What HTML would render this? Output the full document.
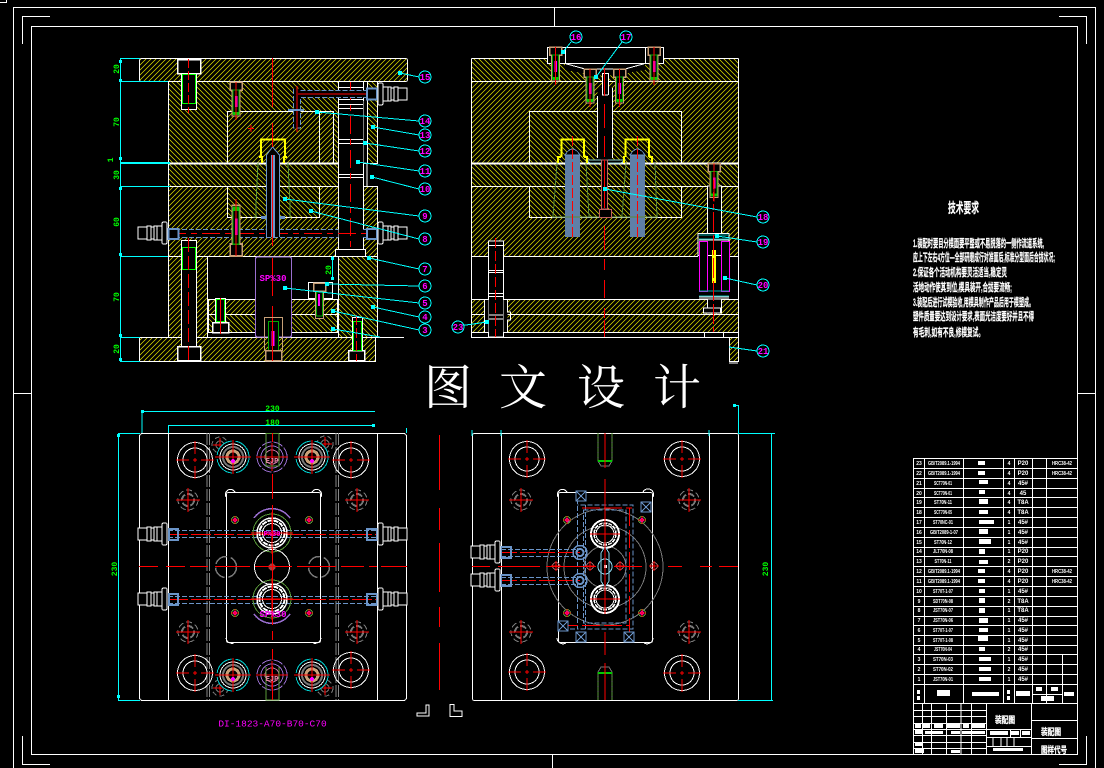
<!DOCTYPE html>
<html lang="zh">
<head>
<meta charset="utf-8">
<title>Mold Assembly Drawing</title>
<style>
html,body{margin:0;padding:0;background:#000;width:1104px;height:768px;overflow:hidden}
svg{display:block;position:absolute;left:0;top:0}
.l{fill:none;stroke:#fff;stroke-width:1}
.r{fill:none;stroke:#f00;stroke-width:1}
.rd{fill:none;stroke:#f00;stroke-width:1;stroke-dasharray:18 5 6 5}
.c{fill:none;stroke:#0ff;stroke-width:1}
.b{fill:none;stroke:#6a94c8;stroke-width:1;stroke-dasharray:5 2}
.dim{font:bold 8px "Liberation Mono",monospace;fill:#0f0;text-anchor:middle}
.lab{font:bold 9px "Liberation Mono",monospace;fill:#f0f;text-anchor:middle}
.t{font:bold 5px "Liberation Sans",sans-serif;fill:#fff;text-anchor:middle}
.req{font:bold 11px "Liberation Sans","Noto Sans CJK SC",sans-serif;fill:#fff;stroke:#fff;stroke-width:.2}
.wm{font:48px "Liberation Serif","Noto Serif CJK SC",serif;fill:#fff;text-anchor:middle}
</style>
</head>
<body>
<svg width="1104" height="768" viewBox="0 0 1104 768" xmlns="http://www.w3.org/2000/svg">
<defs>
<pattern id="h1" patternUnits="userSpaceOnUse" width="5" height="5"><rect width="5" height="5" fill="#000"/><path d="M-1 6L6 -1M-1 1L1 -1M4 6L6 4" stroke="#e8e800" stroke-width=".7" fill="none"/></pattern>
<pattern id="h2" patternUnits="userSpaceOnUse" width="5" height="5"><rect width="5" height="5" fill="#000"/><path d="M-1 -1L6 6M-1 4L1 6M4 -1L6 1" stroke="#e8e800" stroke-width=".7" fill="none"/></pattern>
<g id="nozzle"><rect x="0" y="-11" width="5" height="22" rx="1.5" fill="#000" stroke="#fff"/><rect x="5" y="-7" width="5" height="14" fill="#000" stroke="#fff"/><rect x="10" y="-7" width="3" height="14" fill="#000" stroke="#fff"/><rect x="13" y="-6" width="3" height="12" fill="#000" stroke="#fff"/><rect x="16" y="-7" width="4" height="14" fill="#000" stroke="#fff"/><rect x="20" y="-6" width="9" height="12" fill="#000" stroke="#fff"/></g>
<g id="bolt"><rect x="-6" y="0" width="12" height="8" fill="#000" stroke="#c8a078" stroke-width="1.5"/><rect x="-4" y="8" width="8" height="26" fill="#000" stroke="#c8a078"/><rect x="-3" y="8" width="6" height="24" fill="#000" stroke="#0a0"/><rect x="-1" y="14" width="2.5" height="11" fill="#f0f"/><rect x="-3" y="30" width="6" height="3" fill="#0c0"/><path d="M0 0V38" class="r"/></g>
<g id="big"><circle r="17.5" class="l"/><circle r="12" class="l"/><path d="M-19 0H-6M6 0H19M0 -19V-6M0 6V19M-2 0H2M0 -2V2" class="r"/></g>
<g id="sm"><circle r="10" fill="none" stroke="#777" stroke-dasharray="6 3"/><circle r="6" fill="none" stroke="#777" stroke-width="2" stroke-dasharray="7 2"/><path d="M-12 0H12M0 -12V12" class="r"/></g>
<g id="sm2"><circle r="8" fill="none" stroke="#777" stroke-dasharray="5 3"/><circle r="4" fill="none" stroke="#777"/><path d="M-7 0H7M0 -7V7" class="r"/></g>
<g id="cy"><circle r="16" fill="#000" stroke="#0cc" stroke-dasharray="22 4"/><circle r="13" fill="none" stroke="#fff"/><circle r="10" fill="none" stroke="#777" stroke-width="2"/><circle r="6" fill="none" stroke="#c8a078" stroke-width="3"/><path d="M-18 0H18M0 -17V17" class="r"/><circle cy="4" r="2" fill="#f0f"/></g>
<g id="pu"><circle r="15" fill="none" stroke="#9a6fd0" stroke-dasharray="10 2"/><circle r="11" fill="none" stroke="#9a6fd0"/><circle r="7" fill="none" stroke="#c06fa0"/><path d="M-16 0H16M0 -14V14" class="r"/></g>
<g id="pin"><circle r="3.5" fill="none" stroke="#5a9a3a"/><circle r="2" fill="#f0f"/><path d="M-4 0H4M0 -4V4" stroke="#f00" stroke-width=".6"/></g>
<g id="cav"><circle r="19" fill="none" stroke="#5a9a3a"/><circle r="15" fill="none" stroke="#fff" stroke-width="1.5"/><circle r="12.5" fill="none" stroke="#fff" stroke-width="2" stroke-dasharray="5 1"/><circle r="9.5" fill="none" stroke="#fff"/><path d="M-21 0H21M0 -21V21" class="r"/></g>
<g id="cav2"><circle r="14" fill="none" stroke="#fff" stroke-width="2"/><circle r="11" fill="none" stroke="#fff" stroke-width="1.5" stroke-dasharray="4 1"/><circle r="9" fill="none" stroke="#fff"/><path d="M-15 0H15M0 -15V15" class="r"/></g>
<g id="cr"><circle r="3.5" fill="none" stroke="#a06060"/><path d="M-5 0H5M0 -5V5" class="r"/></g>
<g id="sq"><rect x="-5" y="-5" width="10" height="10" fill="#000" stroke="#6a94c8"/><path d="M-5 -5L5 5M5 -5L-5 5" stroke="#6a94c8"/></g>
</defs>

<g shape-rendering="crispEdges">
<!-- sheet frame -->
<path class="l" d="M0 2.5H6.5V0M13.5 768V7.5H1095.5V768M22.5 44V16.5H50M1059 16.5H1086.5V44M22.5 736V764.5H50M1059 764.5H1086.5V736M31.5 26.5H1077.5V754.5H31.5ZM554.5 7.5V26M13.5 393.5H31M1078 393.5H1095M552.5 755V768"/>

<!-- LEFT SECTION VIEW -->
<g stroke="#fff">
<rect x="139.5" y="58.5" width="268" height="23" rx="2" fill="url(#h1)"/>
<rect x="168.5" y="81.5" width="209" height="82" fill="url(#h2)"/>
<rect x="227.5" y="111.5" width="92" height="52" fill="url(#h1)"/>
<rect x="319.5" y="111.5" width="14" height="52" fill="url(#h1)"/>
<rect x="168.5" y="163.5" width="170" height="23" fill="url(#h2)"/>
<rect x="168.5" y="186.5" width="209" height="70" fill="url(#h1)"/>
<rect x="227.5" y="186.5" width="92" height="31" fill="url(#h2)"/>
<rect x="168.5" y="256.5" width="39" height="81" fill="url(#h1)"/>
<rect x="338.5" y="256.5" width="39" height="81" fill="url(#h2)"/>
<rect x="208.5" y="299.5" width="129" height="15" fill="url(#h1)"/>
<rect x="208.5" y="314.5" width="129" height="18" fill="url(#h2)"/>
<rect x="139.5" y="337.5" width="236" height="24" fill="url(#h1)"/>
</g>
<path class="l" d="M375 337.5H404"/>
<path d="M168 163.5H338" stroke="#fff" stroke-width="2"/>
<rect x="338.5" y="81.5" width="25" height="175" fill="#000" stroke="#fff"/>
<rect x="363.5" y="81.5" width="4" height="20" fill="#000" stroke="#fff"/>
<rect x="363.5" y="101" width="4" height="62" fill="#000"/>
<path class="l" d="M367.5 101V163M338 87.5H363M338 99.5H363M338 104.5H363M338 108.5H363M338 139.5H363M338 143.5H363M338 174.5H363M338 177.5H363M363.5 163V186M367 163.5V186"/>
<rect x="335.5" y="249.5" width="30" height="7" fill="#000" stroke="#fff"/>
<path class="rd" d="M350.5 82V250"/>
<rect x="293.5" y="88.5" width="7" height="40" fill="#000"/>
<rect x="293.5" y="90.5" width="74" height="7" fill="#000"/>
<path class="b" d="M293.5 89V128H300.5V97.5H367M300.5 90.5H367"/>
<path class="r" d="M297 86V132M298 94H378"/>
<rect x="288" y="109" width="16" height="2" fill="#6a94c8"/>
<rect x="367" y="88.5" width="10" height="11" fill="#000" stroke="#6a94c8" stroke-width="2"/>
<rect x="168.5" y="229.5" width="170" height="8" fill="#000"/>
<rect x="363" y="229.5" width="14" height="8" fill="#000"/>
<path class="b" d="M168 229.5H266M279 229.5H338M168 237.5H338M363 229.5H377M363 237.5H377"/>
<path class="rd" d="M168 233.5H377"/>
<rect x="168.5" y="229" width="10" height="10" fill="#000" stroke="#6a94c8" stroke-width="2"/>
<rect x="367" y="229" width="10" height="10" fill="#000" stroke="#6a94c8" stroke-width="2"/>
<path d="M266.5 237V155L272.5 147L279.5 155V237Z" fill="#000"/>
<path d="M266.5 237V155L272.5 147L279.5 155V237" fill="none" stroke="#6a94c8"/>
<rect x="271" y="155" width="4" height="82" fill="#6a94c8"/>
<path d="M261 156V139.5H285V156" fill="none" stroke="#ff0" stroke-width="2"/>
<path d="M259 157H262V163M287 157H284V163" fill="none" stroke="#ff0" stroke-width="2"/>
<path d="M258 163L256 205V217H253.5M288 163L290 205V217H291.5" fill="none" stroke="#5a9a3a"/>
<path d="M261 217.5H266M279 217.5H285" stroke="#6a94c8" stroke-width="3"/>
<path class="r" d="M272.5 58V107M272.5 123V147M272.5 155V246M272.5 262V282M272.5 306V318"/>
<rect x="177.5" y="59.5" width="23" height="14" fill="#000" stroke="#fff" stroke-width="1.5"/>
<rect x="181.5" y="73.5" width="15" height="36" fill="#000" stroke="#fff"/>
<rect x="182.5" y="74.5" width="13" height="29" fill="#000" stroke="#0f0"/>
<path class="r" d="M188.5 59V113" stroke-dasharray="9 3"/>
<rect x="181.5" y="240.5" width="15" height="8" fill="#000" stroke="#fff"/>
<rect x="181.5" y="248.5" width="15" height="99" fill="#000" stroke="#fff"/>
<rect x="182.5" y="247.5" width="13" height="22" fill="#000" stroke="#0f0"/>
<rect x="177.5" y="346.5" width="23" height="14" fill="#000" stroke="#fff" stroke-width="1.5"/>
<path class="r" d="M188.5 238V361" stroke-dasharray="14 4"/>
<use href="#bolt" x="236" y="82"/>
<use href="#bolt" transform="translate(236 256) scale(1 -1.5)"/>
<rect x="212.5" y="322.5" width="16" height="10" fill="#000" stroke="#fff" stroke-width="1.5"/>
<rect x="215.5" y="298.5" width="10" height="24" fill="#000" stroke="#fff"/>
<rect x="216.5" y="299.5" width="8" height="22" fill="#000" stroke="#0f0"/>
<path class="r" d="M220.5 298V334"/>
<rect x="255.5" y="257" width="36" height="80" rx="2" fill="#000" stroke="#9a6fd0" stroke-width="1.3"/>
<path class="r" d="M272.5 258V296M272.5 306V318"/>
<rect x="268.5" y="321.5" width="10" height="29" fill="#000" stroke="#0a0"/>
<rect x="264.5" y="317.5" width="18" height="33" fill="none" stroke="#c8a078"/>
<rect x="271.5" y="331" width="3" height="15" fill="#f0f"/>
<rect x="265.5" y="350.5" width="16" height="10" fill="#000" stroke="#c8a078" stroke-width="1.5"/>
<path class="r" d="M272.5 318V361"/>
<rect x="308.5" y="282.5" width="24" height="16" fill="#000" stroke="#fff"/>
<rect x="313.5" y="283" width="12" height="8" fill="#000" stroke="#c8a078" stroke-width="1.5"/>
<rect x="315.5" y="291.5" width="8" height="27" fill="#000" stroke="#c8a078"/>
<rect x="316.5" y="292" width="6" height="24" fill="#000" stroke="#0a0"/>
<rect x="318" y="294" width="2" height="12" fill="#f0f"/>
<rect x="348.5" y="350.5" width="16" height="10" fill="#000" stroke="#fff" stroke-width="1.5"/>
<rect x="352.5" y="317.5" width="10" height="33" fill="#000" stroke="#fff"/>
<rect x="353.5" y="321.5" width="8" height="29" fill="#000" stroke="#0f0"/>
<path class="r" d="M356.5 315V361" stroke-dasharray="10 3"/>
<path d="M248 128.5H254M251 125V132" class="r"/>
<use href="#nozzle" x="378" y="94"/>
<use href="#nozzle" x="378" y="233"/>
<use href="#nozzle" transform="translate(167 233) scale(-1 1)"/>

<path class="c" d="M120.5 58V361M120 58.5H140M120 81.5H168M120 186.5H170M120 256.5H168M120 337.5H140M120 361.5H140M332.5 256V279"/>
<path d="M120 163H170" stroke="#0ff" stroke-width="2"/>
<g fill="#0ff"><rect x="119" y="60" width="3" height="3"/><rect x="119" y="79" width="3" height="3"/><rect x="119" y="157" width="3" height="3"/><rect x="119" y="187" width="3" height="3"/><rect x="119" y="253" width="3" height="3"/><rect x="119" y="334" width="3" height="3"/><rect x="119" y="358" width="3" height="3"/><rect x="331" y="257" width="3" height="3"/><rect x="331" y="277" width="3" height="3"/></g>

<!-- RIGHT SECTION VIEW -->
<g stroke="#fff">
<rect x="471.5" y="58.5" width="267" height="23" rx="1" fill="url(#h2)"/>
<rect x="471.5" y="81.5" width="267" height="82" fill="url(#h1)"/>
<rect x="529.5" y="111.5" width="152" height="52" fill="url(#h2)"/>
<rect x="471.5" y="163.5" width="267" height="23" fill="url(#h2)"/>
<rect x="471.5" y="186.5" width="267" height="70" fill="url(#h1)"/>
<rect x="529.5" y="186.5" width="152" height="31" fill="url(#h2)"/>
<rect x="471.5" y="256.5" width="267" height="43" fill="#000"/>
<rect x="471.5" y="299.5" width="267" height="15" fill="url(#h1)"/>
<rect x="471.5" y="314.5" width="267" height="18" fill="url(#h1)"/>
<rect x="471.5" y="332.5" width="267" height="5" fill="#000"/>
<rect x="729.5" y="337.5" width="9" height="24" fill="url(#h1)"/>
</g>
<path d="M471 163.5H738" stroke="#fff" stroke-width="2"/>
<path d="M565 63H645V70L628 73 L605 76 L582 73 L565 70Z" fill="#000"/>
<rect x="547.5" y="47.5" width="116" height="16" fill="#000" stroke="#fff"/>
<path class="l" d="M565.5 47.5V63M645.5 47.5V63M565 63.5L585 69H625L645 63.5"/>
<use href="#bolt" x="555.5" y="47"/>
<use href="#bolt" x="654" y="47"/>
<use href="#bolt" x="590" y="69"/>
<use href="#bolt" x="619.5" y="69"/>
<rect x="602" y="73" width="6" height="86" fill="#000"/>
<rect x="597.5" y="88" width="15" height="72" fill="#000"/>
<path class="l" d="M602.5 73V95M608.5 73V95M597.5 96V158M612.5 88V158M602 95H608"/>
<path class="l" d="M602 73.5H608M590 163H620"/>
<path d="M604.5 68V96M604.5 104V128M604.5 136V157" class="r"/>
<path d="M590 163L586 160H625L621 163Z" fill="#000" stroke="#8cc"/>
<path d="M561.5 157V139.5H584V157M625.5 157V139.5H649V157" fill="none" stroke="#ff0" stroke-width="2"/>
<path d="M558 163V157H561M587 163V157H584M624 163V157H625M652 163V157H649" fill="none" stroke="#ff0" stroke-width="2"/>
<rect x="565" y="155" width="15" height="82" fill="#5f7fa8"/>
<rect x="630" y="155" width="15" height="82" fill="#5f7fa8"/>
<path d="M565 155 Q572.5 143 580 155ZM630 155 Q637.5 143 645 155Z" fill="#000" stroke="#6a94c8"/>
<path d="M557 163L553 217M586 163L589 217M626 163L622 217M655 163L657 217M552 217H658" fill="none" stroke="#5a8a3a"/>
<path d="M572.5 136V237M637.5 136V237" stroke="#f00" stroke-dasharray="10 3"/>
<rect x="601.5" y="160" width="6" height="49" fill="#000" stroke="#c06060"/>
<rect x="599.5" y="209.5" width="12" height="8" fill="#000" stroke="#c06060"/>
<path class="r" d="M604.5 160V208M604.5 226V250M604.5 259V270M604.5 280V298M604.5 308V318M604.5 320V337"/>
<rect x="488.5" y="241" width="15" height="96" fill="#000" stroke="#fff"/>
<path class="l" d="M488 245.5H503M488 270.5H503M488 272.5H503M488 293.5H503M488 296.5H503M488 315H503M488 319H503"/>
<path d="M495.5 238V337" stroke="#f00" stroke-dasharray="10 3"/>
<rect x="484.5" y="300" width="4" height="32" fill="#000"/>
<rect x="503.5" y="300" width="4" height="32" fill="#000"/>
<path class="l" d="M484.5 300V332M507.5 300V312H510.5V320H507.5V332"/>
<rect x="707.5" y="186" width="14" height="127" fill="#000" stroke="#fff"/>
<use href="#bolt" x="714" y="163.5"/>
<rect x="703.5" y="308" width="17" height="5" fill="#000" stroke="#fff"/>
<rect x="698" y="233.5" width="31" height="22" fill="#000" stroke="#fff"/>
<rect x="698" y="256" width="31" height="43" fill="#000"/>
<rect x="699.5" y="241.5" width="8" height="50" fill="#000" stroke="#f0f"/>
<rect x="721.5" y="241.5" width="8" height="50" fill="#000" stroke="#f0f"/>
<path class="l" d="M699 240H729M699 299H729M699 297H729"/>
<path d="M699 235H729M699 239H729M699 291H729M699 296H729" stroke="#0aa"/>
<rect x="712" y="250" width="4" height="33" fill="#ff0"/>
<path class="r" d="M713.5 180V210" stroke-dasharray="9 3"/>
<path d="M713.5 212V334" stroke="#f00" stroke-dasharray="20 3"/>
<rect x="704.5" y="332.5" width="19" height="5" fill="#000" stroke="#fff"/>
<path class="l" d="M729 363H738"/>

<!-- labels -->
<g class="c">
<path d="M400 73L419 77M317 112L419 121M373 127L419 135M365 143L419 151M358 162L419 171M372 177L419 189M285 199L419 216M311 211L419 239M369 258L419 269M327 284L419 286M285 288L419 303M373 307L419 317M333 311L419 330M333 329L380 337M563 52L571 42M596 77L622 42M605 189L757 217M717 236L757 242M725 278L757 285M729 347L757 351M487 322L452 327"/>
</g>
<g fill="#0ff"><rect x="398" y="71" width="4" height="4"/><rect x="315" y="110" width="4" height="4"/><rect x="371" y="125" width="4" height="4"/><rect x="363" y="141" width="4" height="4"/><rect x="356" y="160" width="4" height="4"/><rect x="370" y="175" width="4" height="4"/><rect x="283" y="197" width="4" height="4"/><rect x="309" y="209" width="4" height="4"/><rect x="367" y="256" width="4" height="4"/><rect x="325" y="282" width="4" height="4"/><rect x="283" y="286" width="4" height="4"/><rect x="371" y="305" width="4" height="4"/><rect x="331" y="309" width="4" height="4"/><rect x="331" y="327" width="4" height="4"/><rect x="561" y="50" width="4" height="4"/><rect x="594" y="75" width="4" height="4"/><rect x="603" y="187" width="4" height="4"/><rect x="715" y="234" width="4" height="4"/><rect x="723" y="276" width="4" height="4"/><rect x="485" y="320" width="4" height="4"/></g>
<g fill="#000" stroke="#0ff">
<circle cx="425" cy="77" r="6"/><circle cx="425" cy="121" r="6"/><circle cx="425" cy="135" r="6"/><circle cx="425" cy="151" r="6"/><circle cx="425" cy="171" r="6"/><circle cx="425" cy="189" r="6"/><circle cx="425" cy="216" r="6"/><circle cx="425" cy="239" r="6"/><circle cx="425" cy="269" r="6"/><circle cx="425" cy="286" r="6"/><circle cx="425" cy="303" r="6"/><circle cx="425" cy="317" r="6"/><circle cx="425" cy="330" r="6"/>
<circle cx="576" cy="37" r="6"/><circle cx="626" cy="37" r="6"/><circle cx="763" cy="217" r="6"/><circle cx="763" cy="242" r="6"/><circle cx="763" cy="285" r="6"/><circle cx="763" cy="351" r="6"/><circle cx="458" cy="327" r="6"/>
</g>
</g>

<g>
<text class="lab" x="273" y="281">SP%30</text>
<text class="lab" x="425" y="80">15</text><text class="lab" x="425" y="124">14</text><text class="lab" x="425" y="138">13</text><text class="lab" x="425" y="154">12</text><text class="lab" x="425" y="174">11</text><text class="lab" x="425" y="192">10</text><text class="lab" x="425" y="219">9</text><text class="lab" x="425" y="242">8</text><text class="lab" x="425" y="272">7</text><text class="lab" x="425" y="289">6</text><text class="lab" x="425" y="306">5</text><text class="lab" x="425" y="320">4</text><text class="lab" x="425" y="333">3</text>
<text class="lab" x="576" y="40">16</text><text class="lab" x="626" y="40">17</text><text class="lab" x="763" y="220">18</text><text class="lab" x="763" y="245">19</text><text class="lab" x="763" y="288">20</text><text class="lab" x="763" y="354">21</text><text class="lab" x="458" y="330">23</text>
<text class="dim" transform="translate(119 69) rotate(-90)">20</text>
<text class="dim" transform="translate(119 122) rotate(-90)">70</text>
<text class="dim" transform="translate(113 160) rotate(-90)">1</text>
<text class="dim" transform="translate(119 175) rotate(-90)">30</text>
<text class="dim" transform="translate(119 222) rotate(-90)">60</text>
<text class="dim" transform="translate(119 297) rotate(-90)">70</text>
<text class="dim" transform="translate(119 349) rotate(-90)">20</text>
<text class="dim" transform="translate(331 270) rotate(-90)">20</text>
</g>

<!-- BOTTOM LEFT PLAN VIEW -->
<g shape-rendering="crispEdges">
<rect x="139.5" y="433.5" width="267" height="267" rx="3" class="l"/>
<path class="l" d="M168.5 433V700M377.5 433V700"/>
<path d="M207 433V700M209.5 433V700M336 433V700M338.5 433V700" stroke="#888" stroke-dasharray="12 2" fill="none"/>
<rect x="226.5" y="492.5" width="94" height="150" rx="2" class="l"/>
<path class="l" d="M226 497A5 5 0 0 1 235 492M312 492A5 5 0 0 1 321 497M226 638A6 6 0 0 0 234 643M313 643A6 6 0 0 0 321 638"/>
<use href="#big" x="195" y="460"/><use href="#big" x="351" y="460"/><use href="#big" x="195" y="673"/><use href="#big" x="351" y="670"/>
<use href="#sm2" x="220" y="445"/><use href="#sm2" x="325" y="444"/><use href="#sm2" x="220" y="688"/><use href="#sm2" x="325" y="688"/>
<use href="#cy" x="233" y="457"/><use href="#cy" x="312" y="457"/><use href="#cy" x="233" y="675"/><use href="#cy" x="312" y="675"/>
<use href="#pu" x="272" y="457"/><use href="#pu" x="272" y="675"/>
<path d="M266 433.5H279M266 433V466H279V433M266 667V700H279V667" fill="none" stroke="#5a9a3a"/>
<use href="#sm" x="188" y="500"/><use href="#sm" x="357" y="500"/><use href="#sm" x="188" y="632"/><use href="#sm" x="357" y="632"/>
<use href="#pin" x="235" y="520"/><use href="#pin" x="309" y="520"/><use href="#pin" x="235" y="613"/><use href="#pin" x="309" y="613"/>
<path class="b" d="M168 530.5H378M168 537.5H378M168 596.5H378M168 603.5H378"/>
<path d="M168 534.5H378M168 599.5H378" stroke="#f00" stroke-dasharray="20 3"/>
<g fill="none" stroke="#6a94c8" stroke-width="2"><rect x="169" y="529" width="9" height="11"/><rect x="367" y="529" width="10" height="11"/><rect x="169" y="594" width="9" height="11"/><rect x="367" y="594" width="10" height="11"/></g>
<use href="#nozzle" x="378" y="534"/><use href="#nozzle" x="378" y="599"/>
<use href="#nozzle" transform="translate(167 534) scale(-1 1)"/><use href="#nozzle" transform="translate(167 599) scale(-1 1)"/>
<path d="M254 518A22 22 0 0 1 290 518" fill="none" stroke="#9a6fd0" stroke-width="1.5"/>
<path d="M254 614A22 22 0 0 0 290 614" fill="none" stroke="#9a6fd0" stroke-width="1.5"/>
<use href="#cav" x="272" y="533"/><use href="#cav" x="272" y="599"/>
<circle cx="272" cy="567" r="17.5" class="l"/>
<circle cx="272" cy="567" r="3.5" fill="#a04040"/>
<circle cx="226" cy="567" r="10.5" fill="none" stroke="#777" stroke-width="1.5" stroke-dasharray="14 4"/>
<circle cx="319" cy="567" r="10.5" fill="none" stroke="#777" stroke-width="1.5" stroke-dasharray="14 4"/>
<path d="M139 566.5H158M166 566.5H185M190 566.5H208M215 566.5H250M255 566.5H292M297 566.5H336M341 566.5H364M369 566.5H377M381 566.5H407" class="r"/>
<path d="M272.5 433V442M272.5 474V499M272.5 505V540M272.5 548V625M272.5 631V640M272.5 649V660M272.5 666V700" class="r"/>
<path class="c" d="M142 411.5H375M142 411V433M168.5 425V433M168 425.5H373M118.5 433V700M118 433.5H140M118 700.5H140M406.5 428V433"/>
<g fill="#0ff"><rect x="141" y="410" width="3" height="3"/><rect x="372" y="424" width="3" height="3"/><rect x="117" y="434" width="3" height="3"/><rect x="117" y="695" width="3" height="3"/></g>
<path class="r" d="M439.5 435V490M439.5 508V530M439.5 543V592M439.5 607V627M439.5 643V690"/>
<path d="M417 716H429V705H426V713H417Z" fill="#000" stroke="#fff"/>
<path d="M450 704.5H454V711H462V716.5H450Z" fill="#000" stroke="#fff"/>
</g>
<text class="dim" x="272.500" y="411">230</text>
<text class="dim" x="272.500" y="425">180</text>
<text class="dim" transform="translate(117 569) rotate(-90)">230</text>
<text x="272.500" y="726.500" style="font:9.500px 'Liberation Mono',monospace;fill:#f0f;text-anchor:middle">DI-1823-A70-B70-C70</text>
<text class="lab" x="272" y="536" style="font-size:7px">P%30</text>
<text class="lab" x="273" y="617">SP%30</text>
<text class="lab" x="272" y="463" style="font-size:7px;fill:#e8a">EJP</text>
<text class="lab" x="272" y="681" style="font-size:7px;fill:#e8a">EJP</text>

<!-- BOTTOM RIGHT PLAN VIEW -->
<g shape-rendering="crispEdges">
<rect x="472.500" y="433.500" width="266" height="267" rx="2" class="l"/>
<path class="l" d="M501.500 433V700M709.500 433V700"/>
<path class="c" d="M472 430V436M501 430V436M709 430V436M738.500 405V433M733 405.500H738M738 433.500H775M738 700.500H773M771.500 434V700"/>
<rect x="733" y="404" width="3" height="3" fill="#0ff"/>
<use href="#big" x="527" y="459"/><use href="#big" x="682" y="459"/><use href="#big" x="527" y="672"/><use href="#big" x="682" y="673"/>
<use href="#sm" x="521" y="500"/><use href="#sm" x="689" y="500"/><use href="#sm" x="521" y="632"/><use href="#sm" x="689" y="632"/>
<rect x="558.500" y="492.500" width="94" height="150" rx="2" class="l"/>
<path class="l" d="M558 497A5 5 0 0 1 567 492M643 492A5 5 0 0 1 653 497M557 638A6 6 0 0 0 566 643M644 643A6 6 0 0 0 653 638"/>
<g fill="none" stroke="#777">
<circle cx="605" cy="567" r="58"/><circle cx="605" cy="567" r="41"/><circle cx="605" cy="567" r="21"/>
<path d="M598 433V461L601 466H609L612 461V433M598 700V672L601 667H609L612 672V700"/>
</g>
<path d="M598 433V461M612 433V461M598 672V700M612 672V700" stroke="#5a9a3a" stroke-dasharray="4 1"/>
<path d="M598 461H612M598 673H612" stroke="#0c0" stroke-width="2"/>
<path class="b" d="M577.500 492V629H633V505H577.500M585.500 629V505M583.500 510H626V623H583.500ZM563 629H577"/>
<path class="r" d="M582 508H632M629.500 508V642M560 625.500H630" stroke-dasharray="18 4"/>
<path class="b" d="M501 549.500H578M501 556.500H578M501 577.500H578M501 584.500H578"/>
<path d="M501 552.500H580M501 580.500H580" stroke="#f00" stroke-dasharray="16 3"/>
<g fill="none" stroke="#6a94c8" stroke-width="2"><rect x="501" y="547" width="10" height="11"/><rect x="501" y="575" width="10" height="11"/></g>
<circle cx="580" cy="552.500" r="7" fill="none" stroke="#6a94c8" stroke-width="1.500"/><circle cx="580" cy="552.500" r="3.500" fill="none" stroke="#6a94c8" stroke-width="2"/>
<circle cx="580" cy="580.500" r="7" fill="none" stroke="#6a94c8" stroke-width="1.500"/><circle cx="580" cy="580.500" r="3.500" fill="none" stroke="#6a94c8" stroke-width="2"/>
<use href="#nozzle" transform="translate(500 552) scale(-1 1)"/><use href="#nozzle" transform="translate(500 580) scale(-1 1)"/>
<use href="#sq" x="581" y="496"/><use href="#sq" x="646" y="507"/><use href="#sq" x="563" y="626"/><use href="#sq" x="581" y="637"/><use href="#sq" x="629" y="637"/>
<use href="#cav2" x="605" y="534"/><use href="#cav2" x="605" y="599"/>
<use href="#pin" x="567" y="520"/><use href="#pin" x="642" y="520"/><use href="#pin" x="567" y="613"/><use href="#pin" x="642" y="613"/>
<path d="M601 553L604 548H606L609 553V581L606 586H604L601 581Z" fill="#000" stroke="#8cd8f0"/>
<ellipse cx="605" cy="566.500" rx="7" ry="7.500" fill="none" stroke="#8cd8f0"/>
<use href="#cr" x="556" y="566"/><use href="#cr" x="590" y="566"/><use href="#cr" x="620" y="566"/><use href="#cr" x="654" y="566"/>
<rect x="604" y="565" width="3" height="3" fill="#fff"/>
<path d="M472 566.500H490M498 566.500H540M546 566.500H596M614 566.500H642M668 566.500H682M700 566.500H712M719 566.500H738" class="r"/>
<path d="M605 433V468M605 479V519M605 525V612M605 632V655M605 663V700" class="r"/>
</g>
<text class="dim" transform="translate(768 569) rotate(-90)">230</text>

<!-- TECH REQUIREMENTS -->
<text class="req" x="948" y="213" textLength="31" lengthAdjust="spacingAndGlyphs" style="font-size:14px">技术要求</text>
<text class="req" x="913" y="247" textLength="131" lengthAdjust="spacingAndGlyphs">1.装配时要目分模面要平整或不易脱落的一侧作流道系统,</text>
<text class="req" x="913" y="261" textLength="142" lengthAdjust="spacingAndGlyphs">应上下左右4方位—全部研磨成行对准面后,标准分型面后合拢状况;</text>
<text class="req" x="913" y="276" textLength="94" lengthAdjust="spacingAndGlyphs">2.保证各个活动机构要灵活适当,稳定灵</text>
<text class="req" x="913" y="291" textLength="99" lengthAdjust="spacingAndGlyphs">活地动作使其到位,模具装开,合拢要流畅;</text>
<text class="req" x="913" y="306" textLength="121" lengthAdjust="spacingAndGlyphs">3.装配后进行试模验收,用模具制作产品后用于模塑成。</text>
<text class="req" x="913" y="320" textLength="121" lengthAdjust="spacingAndGlyphs">塑件质量要达到设计要求,表面光洁度要好并且不得</text>
<text class="req" x="913" y="336" textLength="71" lengthAdjust="spacingAndGlyphs">有毛刺,如有不良,修模复试。</text>

<!-- TITLE TABLE -->
<g shape-rendering="crispEdges">
<path class="l" d="M913.500 458.500H1077.500M913.500 468.500H1077.500M913.500 478.500H1077.500M913.500 488.500H1077.500M913.500 497.500H1077.500M913.500 507.500H1077.500M913.500 517.500H1077.500M913.500 527.500H1077.500M913.500 537.500H1077.500M913.500 547.500H1077.500M913.500 556.500H1077.500M913.500 566.500H1077.500M913.500 576.500H1077.500M913.500 586.500H1077.500M913.500 596.500H1077.500M913.500 606.500H1077.500M913.500 616.500H1077.500M913.500 625.500H1077.500M913.500 635.500H1077.500M913.500 645.500H1077.500M913.500 654.500H1077.500M913.500 664.500H1077.500M913.500 674.500H1077.500M913.500 684.500H1077.500M913.500 703.500H1077.500"/>
<path class="l" d="M913.500 458V754M924.500 458V703M963.500 458V703M1003.500 458V703M1014.500 458V703M1032.500 458V703M1046.500 458V703M1062.500 654V703M1032.500 694.500H1062.500"/>
<g fill="#fff">
<rect x="978" y="461" width="7" height="4"/><rect x="978" y="471" width="7" height="4"/><rect x="979" y="480" width="9" height="4"/><rect x="979" y="490" width="6" height="4"/><rect x="979" y="499" width="9" height="5"/><rect x="979" y="510" width="9" height="4"/><rect x="979" y="520" width="15" height="4"/><rect x="979" y="529" width="9" height="5"/><rect x="979" y="539" width="12" height="5"/><rect x="979" y="549" width="6" height="5"/><rect x="979" y="560" width="9" height="4"/><rect x="978" y="569" width="7" height="4"/><rect x="978" y="579" width="7" height="4"/><rect x="979" y="589" width="6" height="4"/><rect x="979" y="598" width="6" height="5"/><rect x="979" y="608" width="6" height="5"/><rect x="979" y="618" width="9" height="5"/><rect x="979" y="628" width="9" height="4"/><rect x="978" y="636" width="10" height="5"/><rect x="979" y="647" width="6" height="4"/><rect x="979" y="657" width="12" height="4"/><rect x="979" y="667" width="12" height="4"/><rect x="979" y="677" width="12" height="4"/>
<rect x="917" y="690" width="3" height="4"/><rect x="917" y="696" width="3" height="4"/><rect x="937" y="690" width="13" height="6"/><rect x="972" y="692" width="27" height="4"/><rect x="1007" y="690" width="3" height="4"/><rect x="1007" y="696" width="3" height="4"/><rect x="1016" y="691" width="14" height="5"/><rect x="1036" y="687" width="6" height="4"/><rect x="1051" y="687" width="7" height="4"/><rect x="1041" y="696" width="13" height="5"/><rect x="1064" y="692" width="10" height="4"/>
</g>
<path class="l" d="M913.500 703.500V754M913.500 710.500H986.500M913.500 716.500H986.500M913.500 723.500H986.500M913.500 729.500H986.500M913.500 735.500H986.500M913.500 742.500H986.500M913.500 748.500H986.500M922.500 703V754M931.500 703V754M946.500 703V754M961 703V754M971.500 703V754M986.500 703V754M1031.500 703V754M986.500 729.500H1031.500M986.500 737.500H1031.500M986.500 746.500H1031.500M1031.500 720.500H1077.500M1031.500 738.500H1077.500M1010.500 729V737M1020.500 729V737M993 738V746M1001 738V746M1007 738V746M1014 738V746"/>
<g fill="#fff"><rect x="915" y="724" width="6" height="4"/><rect x="923" y="724" width="7" height="4"/><rect x="934" y="724" width="9" height="4"/><rect x="947" y="724" width="13" height="4"/><rect x="963" y="724" width="6" height="4"/><rect x="972" y="724" width="13" height="4"/>
<rect x="915" y="730" width="7" height="4"/><rect x="925" y="731" width="18" height="3"/><rect x="951" y="731" width="9" height="3"/><rect x="962" y="731" width="23" height="3"/>
<rect x="915" y="743" width="8" height="3"/><rect x="915" y="749" width="9" height="4"/><rect x="951" y="750" width="9" height="3"/>
<rect x="990" y="731" width="18" height="4"/><rect x="1011" y="731" width="8" height="4"/><rect x="1022" y="731" width="8" height="4"/><rect x="993" y="748" width="30" height="3"/></g>
</g>
<g>
<text class="t" x="944" y="465" textLength="32" lengthAdjust="spacingAndGlyphs">GB/T2089.1-1994</text><text class="t" x="944" y="475" textLength="32" lengthAdjust="spacingAndGlyphs">GB/T2089.1-1994</text>
<text class="t" x="943" y="485" textLength="18" lengthAdjust="spacingAndGlyphs">SCT70N-01</text><text class="t" x="943" y="495" textLength="18" lengthAdjust="spacingAndGlyphs">SCT70N-01</text>
<text class="t" x="943" y="504" textLength="18" lengthAdjust="spacingAndGlyphs">ST70N-11</text><text class="t" x="943" y="514" textLength="18" lengthAdjust="spacingAndGlyphs">SCT70N-05</text>
<text class="t" x="943" y="524" textLength="20" lengthAdjust="spacingAndGlyphs">ST70NC-01</text><text class="t" x="944" y="534" textLength="28" lengthAdjust="spacingAndGlyphs">GB/T2089-1-07</text>
<text class="t" x="943" y="544" textLength="18" lengthAdjust="spacingAndGlyphs">ST70N-12</text><text class="t" x="943" y="553" textLength="20" lengthAdjust="spacingAndGlyphs">JLT70N-08</text>
<text class="t" x="943" y="563" textLength="17" lengthAdjust="spacingAndGlyphs">ST70N-11</text><text class="t" x="944" y="573" textLength="32" lengthAdjust="spacingAndGlyphs">GB/T2089.1-1994</text>
<text class="t" x="944" y="583" textLength="32" lengthAdjust="spacingAndGlyphs">GB/T2089.1-1994</text><text class="t" x="943" y="593" textLength="20" lengthAdjust="spacingAndGlyphs">ST70T-1-07</text>
<text class="t" x="943" y="603" textLength="20" lengthAdjust="spacingAndGlyphs">SDT70N-08</text><text class="t" x="943" y="612" textLength="20" lengthAdjust="spacingAndGlyphs">JST70N-07</text>
<text class="t" x="943" y="622" textLength="20" lengthAdjust="spacingAndGlyphs">JST70N-06</text><text class="t" x="943" y="632" textLength="20" lengthAdjust="spacingAndGlyphs">ST70T-1-07</text>
<text class="t" x="943" y="642" textLength="20" lengthAdjust="spacingAndGlyphs">ST70T-1-08</text><text class="t" x="943" y="651" textLength="18" lengthAdjust="spacingAndGlyphs">JST70N-04</text>
<text class="t" x="943" y="661" textLength="20" lengthAdjust="spacingAndGlyphs">ST70N-03</text><text class="t" x="943" y="671" textLength="20" lengthAdjust="spacingAndGlyphs">ST70N-02</text>
<text class="t" x="943" y="681" textLength="20" lengthAdjust="spacingAndGlyphs">JST70N-01</text>
<text class="t" x="919" y="465">23</text><text class="t" x="919" y="475">22</text><text class="t" x="919" y="485">21</text><text class="t" x="919" y="495">20</text><text class="t" x="919" y="504">19</text><text class="t" x="919" y="514">18</text><text class="t" x="919" y="524">17</text><text class="t" x="919" y="534">16</text><text class="t" x="919" y="544">15</text><text class="t" x="919" y="553">14</text><text class="t" x="919" y="563">13</text><text class="t" x="919" y="573">12</text><text class="t" x="919" y="583">11</text><text class="t" x="919" y="593">10</text><text class="t" x="919" y="603">9</text><text class="t" x="919" y="612">8</text><text class="t" x="919" y="622">7</text><text class="t" x="919" y="632">6</text><text class="t" x="919" y="642">5</text><text class="t" x="919" y="651">4</text><text class="t" x="919" y="661">3</text><text class="t" x="919" y="671">2</text><text class="t" x="919" y="681">1</text>
<text class="t" x="1009" y="465">4</text><text class="t" x="1009" y="475">4</text><text class="t" x="1009" y="485">4</text><text class="t" x="1009" y="495">4</text><text class="t" x="1009" y="504">4</text><text class="t" x="1009" y="514">4</text><text class="t" x="1009" y="524">1</text><text class="t" x="1009" y="534">1</text><text class="t" x="1009" y="544">1</text><text class="t" x="1009" y="553">1</text><text class="t" x="1009" y="563">2</text><text class="t" x="1009" y="573">4</text><text class="t" x="1009" y="583">4</text><text class="t" x="1009" y="593">1</text><text class="t" x="1009" y="603">2</text><text class="t" x="1009" y="612">1</text><text class="t" x="1009" y="622">1</text><text class="t" x="1009" y="632">1</text><text class="t" x="1009" y="642">1</text><text class="t" x="1009" y="651">2</text><text class="t" x="1009" y="661">1</text><text class="t" x="1009" y="671">2</text><text class="t" x="1009" y="681">1</text>
<text class="t" x="1023" y="465" style="font-size:6px">P20</text><text class="t" x="1023" y="475" style="font-size:6px">P20</text><text class="t" x="1023" y="485" style="font-size:6px">45#</text><text class="t" x="1023" y="495" style="font-size:6px">45</text><text class="t" x="1023" y="504" style="font-size:6px">T8A</text><text class="t" x="1023" y="514" style="font-size:6px">T8A</text><text class="t" x="1023" y="524" style="font-size:6px">45#</text><text class="t" x="1023" y="534" style="font-size:6px">45#</text><text class="t" x="1023" y="544" style="font-size:6px">45#</text><text class="t" x="1023" y="553" style="font-size:6px">P20</text><text class="t" x="1023" y="563" style="font-size:6px">P20</text><text class="t" x="1023" y="573" style="font-size:6px">P20</text><text class="t" x="1023" y="583" style="font-size:6px">P20</text><text class="t" x="1023" y="593" style="font-size:6px">45#</text><text class="t" x="1023" y="603" style="font-size:6px">T8A</text><text class="t" x="1023" y="612" style="font-size:6px">T8A</text><text class="t" x="1023" y="622" style="font-size:6px">45#</text><text class="t" x="1023" y="632" style="font-size:6px">45#</text><text class="t" x="1023" y="642" style="font-size:6px">45#</text><text class="t" x="1023" y="651" style="font-size:6px">45#</text><text class="t" x="1023" y="661" style="font-size:6px">45#</text><text class="t" x="1023" y="671" style="font-size:6px">45#</text><text class="t" x="1023" y="681" style="font-size:6px">45#</text>
<text class="t" x="1062" y="465" textLength="20" lengthAdjust="spacingAndGlyphs">HRC38-42</text><text class="t" x="1062" y="475" textLength="20" lengthAdjust="spacingAndGlyphs">HRC38-42</text><text class="t" x="1062" y="573" textLength="20" lengthAdjust="spacingAndGlyphs">HRC38-42</text><text class="t" x="1062" y="583" textLength="20" lengthAdjust="spacingAndGlyphs">HRC38-42</text>
</g>
<text x="1005" y="723" textLength="20" lengthAdjust="spacingAndGlyphs" text-anchor="middle" style="font:bold 9px 'Liberation Sans','Noto Sans CJK SC',sans-serif;fill:#fff;stroke:#fff;stroke-width:.3">装配图</text>
<text x="1051" y="735" textLength="20" lengthAdjust="spacingAndGlyphs" text-anchor="middle" style="font:bold 9px 'Liberation Sans','Noto Sans CJK SC',sans-serif;fill:#fff;stroke:#fff;stroke-width:.3">装配图</text>
<text x="1054" y="753" textLength="26" lengthAdjust="spacingAndGlyphs" text-anchor="middle" style="font:bold 9px 'Liberation Sans','Noto Sans CJK SC',sans-serif;fill:#fff;stroke:#fff;stroke-width:.3">图样代号</text>

<!-- watermark -->
<text class="wm" x="448" y="404">图</text>
<text class="wm" x="523" y="404">文</text>
<text class="wm" x="601" y="404">设</text>
<text class="wm" x="677" y="404">计</text>
</svg>
</body>
</html>
